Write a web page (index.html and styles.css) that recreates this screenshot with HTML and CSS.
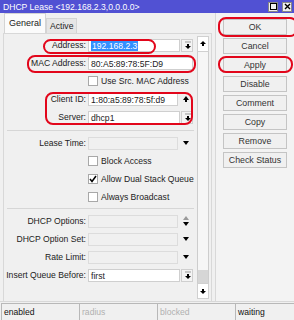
FILE: index.html
```html
<!DOCTYPE html>
<html>
<head>
  <title>DHCP Lease</title>
  <meta name="viewport" content="width=device-width, initial-scale=1">
  <link rel="stylesheet" href="styles.css">
</head>
<body>
<div class="win">
  <div class="title">
    <span>DHCP Lease &lt;192.168.2.3,0.0.0.0&gt;</span>
    <div class="wbtns">
      <span class="wbtn"><svg width="9" height="9"><rect x="1.5" y="1.5" width="6" height="6" fill="none" stroke="#000"/></svg></span>
      <span class="wbtn"><svg width="9" height="9"><path d="M2 2L7 7M7 2L2 7" stroke="#000" stroke-width="1.4"/></svg></span>
    </div>
  </div>

  <div class="main">
    <div class="left">
      <div class="tabs">
        <span class="tab on">General</span>
        <span class="tab">Active</span>
      </div>
      <div class="panel">
        <div class="form">
          <div class="row">
            <label>Address:</label>
            <div class="field">
              <span class="input w-btn"><span class="sel">192.168.2.3</span></span>
              <span class="fbtn"><svg width="12" height="12"><path d="M3 3h6" stroke="#999"/><rect x="5" y="5" width="2" height="2"/><path d="M3 7h6l-3 3z"/></svg></span>
            </div>
          </div>
          <div class="row">
            <label>MAC Address:</label>
            <div class="field"><span class="input full">80:A5:89:78:5F:D9</span></div>
          </div>
          <div class="row">
            <label></label>
            <div class="field"><span class="check"></span><span class="clabel">Use Src. MAC Address</span></div>
          </div>
          <div class="row">
            <label>Client ID:</label>
            <div class="field">
              <span class="input w-arr">1:80:a5:89:78:5f:d9</span>
              <span class="arr"><svg width="10" height="10"><path d="M2 6h6L5 2z"/><rect x="4" y="6" width="2" height="2"/></svg></span>
            </div>
          </div>
          <div class="row">
            <label>Server:</label>
            <div class="field">
              <span class="input w-btn">dhcp1</span>
              <span class="fbtn"><svg width="12" height="12"><path d="M3 3h6" stroke="#999"/><rect x="5" y="5" width="2" height="2"/><path d="M3 7h6l-3 3z"/></svg></span>
            </div>
          </div>

          <div class="sep s1"></div>

          <div class="row">
            <label>Lease Time:</label>
            <div class="field">
              <span class="input w-arr off"></span>
              <span class="arr"><svg width="10" height="10"><path d="M2 3h6L5 7z"/></svg></span>
            </div>
          </div>
          <div class="row">
            <label></label>
            <div class="field"><span class="check"></span><span class="clabel">Block Access</span></div>
          </div>
          <div class="row">
            <label></label>
            <div class="field"><span class="check"><svg width="8" height="8"><path d="M1 4l2 2.5L7 1" fill="none" stroke="#000" stroke-width="1.5"/></svg></span><span class="clabel">Allow Dual Stack Queue</span></div>
          </div>
          <div class="row">
            <label></label>
            <div class="field"><span class="check"></span><span class="clabel">Always Broadcast</span></div>
          </div>

          <div class="sep s2"></div>

          <div class="row">
            <label>DHCP Options:</label>
            <div class="field">
              <span class="input w-arr off"></span>
              <span class="arr"><svg width="10" height="12"><path d="M2 5h6L5 1z" fill="#999"/><path d="M2 7h6l-3 4z"/></svg></span>
            </div>
          </div>
          <div class="row">
            <label>DHCP Option Set:</label>
            <div class="field">
              <span class="input w-arr off"></span>
              <span class="arr"><svg width="10" height="10"><path d="M2 3h6L5 7z"/></svg></span>
            </div>
          </div>
          <div class="row">
            <label>Rate Limit:</label>
            <div class="field">
              <span class="input w-arr off"></span>
              <span class="arr"><svg width="10" height="10"><path d="M2 3h6L5 7z"/></svg></span>
            </div>
          </div>
          <div class="row">
            <label>Insert Queue Before:</label>
            <div class="field">
              <span class="input w-btn">first</span>
              <span class="fbtn"><svg width="12" height="12"><path d="M3 3h6" stroke="#999"/><rect x="5" y="5" width="2" height="2"/><path d="M3 7h6l-3 3z"/></svg></span>
            </div>
          </div>
        </div>

        <div class="scroll">
          <span class="sbtn"><svg width="10" height="10"><path d="M2 5h6L5 2z"/><rect x="4" y="5" width="2" height="2"/></svg></span>
          <span class="track"></span>
          <span class="thumb"></span>
          <span class="sbtn"><svg width="10" height="10"><rect x="4" y="3" width="2" height="2"/><path d="M2 5h6l-3 3z"/></svg></span>
        </div>
      </div>
    </div>

    <div class="side">
      <button>OK</button>
      <button>Cancel</button>
      <button>Apply</button>
      <button>Disable</button>
      <button>Comment</button>
      <button>Copy</button>
      <button>Remove</button>
      <button>Check Status</button>
    </div>
  </div>

  <div class="status">
    <span class="cell">enabled</span>
    <span class="cell dim">radius</span>
    <span class="cell dim">blocked</span>
    <span class="cell">waiting</span>
  </div>

  <!-- red annotation marks -->
  <div class="mark m-addr"></div>
  <div class="mark m-mac"></div>
  <div class="mark m-client"></div>
  <div class="mark m-ok"></div>
  <div class="mark m-apply"></div>
</div>
</body>
</html>
```

FILE: styles.css
```css
body {
  margin: 0;
  background: #fff;
  font-family: "Liberation Sans", Arial, sans-serif;
  font-size: 8.6px;
  color: #222;
}
.win {
  position: relative;
  width: 294px;
  height: 320px;
  background: #f0f0f0;
  overflow: hidden;
}
.title {
  height: 13px;
  background: #5151d3;
  color: #fff;
  display: flex;
  align-items: center;
  justify-content: space-between;
  padding: 0 2px 0 3px;
  box-sizing: border-box;
  font-size: 8.6px;
}
.wbtns {
  display: flex;
  gap: 4px;
}
.wbtn {
  width: 10px;
  height: 10px;
  background: #f0f0f0;
  border: 1px solid #888;
  box-sizing: border-box;
  display: flex;
  align-items: center;
  justify-content: center;
}
.main {
  display: flex;
  height: 288px;
}
.left {
  width: 212px;
  padding-left: 3px;
  box-sizing: border-box;
  display: flex;
  flex-direction: column;
}
.tabs {
  height: 20px;
  display: flex;
  align-items: flex-end;
  padding-left: 1px;
}
.tab {
  height: 14px;
  padding: 0 3px;
  line-height: 14px;
  background: #e6e6e6;
  border: 1px solid #d4d4d4;
  border-bottom: none;
  color: #222;
}
.tab.on {
  height: 19px;
  line-height: 19px;
  background: #fbfbfb;
  padding: 0 4px;
  font-size: 9px;
}
.panel {
  flex: 1;
  display: flex;
  border: 1px solid #d8d8d8;
  border-bottom: none;
  padding: 2px 1px 2px 0;
}
.form {
  width: 190px;
}
.row {
  height: 18px;
  display: flex;
  align-items: center;
}
.row label {
  width: 84px;
  padding-right: 2px;
  box-sizing: border-box;
  text-align: right;
  white-space: nowrap;
}
.field {
  width: 106px;
  display: flex;
  align-items: center;
}
.input {
  height: 13px;
  line-height: 12px;
  background: #fff;
  border: 1px solid #cfcfcf;
  box-sizing: border-box;
  padding-left: 2px;
  white-space: nowrap;
  overflow: hidden;
}
.input.off {
  background: #f0f0f0;
  border-color: #dcdcdc;
}
.w-btn { width: 92px; }
.w-arr { width: 90px; }
.full { width: 105px; }
.sel {
  background: #3390ff;
  color: #fff;
  padding: 0 1px;
}
.fbtn {
  width: 12px;
  height: 13px;
  margin-left: 1px;
  border: 1px solid #cfcfcf;
  box-sizing: border-box;
  background: #f4f4f4;
  display: flex;
  align-items: center;
  justify-content: center;
}
.arr {
  width: 16px;
  display: flex;
  justify-content: center;
}
.check {
  width: 10px;
  height: 10px;
  background: #fff;
  border: 1px solid #a8a8a8;
  box-sizing: border-box;
  display: flex;
  align-items: center;
  justify-content: center;
}
.clabel {
  margin-left: 3px;
  white-space: nowrap;
}
.sep {
  height: 1px;
  background: #d6d6d6;
  margin-left: 3px;
  width: 187px;
}
.s1 { margin-top: 4px; margin-bottom: 3px; }
.s2 { margin-top: 2px; margin-bottom: 3px; }
.scroll {
  width: 12px;
  margin-left: 3px;
  display: flex;
  flex-direction: column;
  border: 1px solid #cdcdcd;
  box-sizing: border-box;
  background: #f6f6f6;
}
.sbtn {
  height: 14px;
  display: flex;
  align-items: center;
  justify-content: center;
  background: #fff;
  border: 1px solid #d0d0d0;
  margin: -1px;
}
.track {
  flex: 1;
}
.thumb {
  height: 14px;
  background: #d6d6d6;
}
.side {
  flex: 1;
  margin-left: 3px;
  border-left: 1px solid #d8d8d8;
  padding: 6px 0 0 7px;
  display: flex;
  flex-direction: column;
  gap: 3px;
  background: #f3f3f3;
}
.side button {
  width: 64px;
  height: 16px;
  padding: 0;
  font-family: inherit;
  font-size: 8.8px;
  color: #333;
  background: #f0f0f0;
  border: 1px solid #c4c4c4;
}
.status {
  height: 19px;
  display: flex;
  padding: 1px 0 0 1px;
  box-sizing: border-box;
  border-top: 1px solid #d8d8d8;
}
.cell {
  width: 75px;
  border-left: 1px solid #b8b8b8;
  border-top: 1px solid #b8b8b8;
  padding-left: 2px;
  line-height: 16px;
  color: #111;
}
.cell.dim {
  color: #b0b0b0;
}
.cell:last-child {
  flex: 1;
}
.mark {
  position: absolute;
  border: 2px solid #e2061b;
  border-radius: 8px;
  box-sizing: border-box;
}
.m-addr { left: 43px; top: 39px; width: 113px; height: 15px; }
.m-mac { left: 27px; top: 55px; width: 169px; height: 18px; }
.m-client { left: 45px; top: 92px; width: 148px; height: 33px; }
.m-ok { left: 218px; top: 17px; width: 80px; height: 20px; }
.m-apply { left: 218px; top: 56px; width: 75px; height: 17px; }
```
